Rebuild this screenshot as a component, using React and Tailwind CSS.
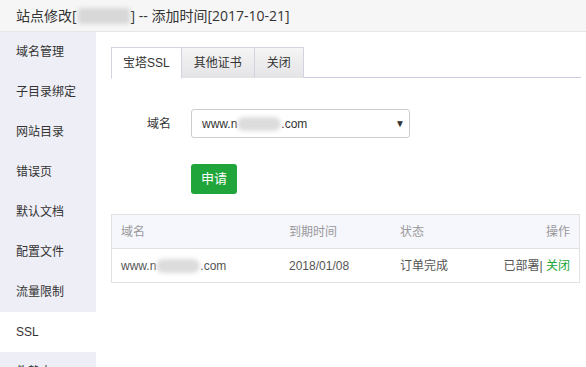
const menu = ['域名管理', '子目录绑定', '网站目录', '错误页', '默认文档', '配置文件', '流量限制', 'SSL', '伪静态'];

function Blur({ w }) {
  return <span className={`inline-block ${w} h-[14px] align-middle bg-[#dcdcdc] rounded-full blur-[2px]`} />;
}

export default function App() {
  return (
    <div className="w-[586px] h-[367px] overflow-hidden bg-white text-[#333] font-['Liberation_Sans','Noto_Sans_CJK_SC',sans-serif]">
      {/* Title */}
      <div className="h-[32px] bg-[#f6f6f6] border-b border-[#e6e6e6] flex items-center pl-[16px] text-[14px] text-[#333] font-['Open_Sans','Noto_Sans_CJK_SC',sans-serif]">
        站点修改[<span className="inline-block w-[52px] h-[16px] mx-[1px] bg-[#d8d8d8] blur-[2px] rounded" />] -- 添加时间[2017-10-21]
      </div>

      <div className="flex h-[335px]">
        {/* Sidebar */}
        <div className="w-[96px] shrink-0 bg-[#eeeef6]">
          {menu.map((m) => (
            <div
              key={m}
              className={`h-[40px] flex items-center pl-[16px] text-[12px] text-[#333] ${m === 'SSL' ? 'bg-white' : ''}`}
            >
              {m}
            </div>
          ))}
        </div>

        {/* Content */}
        <div className="flex-1 pt-[15px] pl-[15px] pr-[5px]">
          <div className="flex border-b border-[#cdcae3] h-[31px]">
            <div className="h-[32px] px-[11px] flex items-center text-[12px] bg-white border border-[#d3d2e0] border-b-white">宝塔SSL</div>
            <div className="h-[31px] px-[12px] flex items-center text-[12px] bg-gradient-to-b from-[#f5f5f5] to-[#e4e3e6] border-t border-r border-[#d3d2e0]">其他证书</div>
            <div className="h-[31px] px-[12px] flex items-center text-[12px] bg-gradient-to-b from-[#f5f5f5] to-[#e4e3e6] border-t border-r border-[#d3d2e0]">关闭</div>
          </div>

          <div className="flex items-center mt-[31px]">
            <div className="w-[60px] text-right text-[12px] text-[#333]">域名</div>
            <div className="ml-[20px] w-[219px] h-[29px] border border-[#ccc] rounded-[3px] flex items-center justify-between pl-[10px] pr-[4px] text-[12px] text-[#333]">
              <span className="flex items-center">
                www.n<Blur w="w-[44px]" />.com
              </span>
              <span className="text-[10px] text-[#333]">▼</span>
            </div>
          </div>

          <div className="ml-[80px] mt-[26px] w-[46px] h-[30px] bg-[#20a53a] rounded-[3px] flex items-center justify-center text-white text-[13px]">
            申请
          </div>

          <div className="mt-[20px] w-[469px] border border-[#e2e2e2] text-[12px]">
            <div className="h-[34px] bg-[#f6f6fd] border-b border-[#e2e2e2] grid grid-cols-[168px_111px_1fr_auto] items-center px-[9px] text-[#999]">
              <span>域名</span>
              <span>到期时间</span>
              <span>状态</span>
              <span>操作</span>
            </div>
            <div className="h-[33px] grid grid-cols-[168px_111px_1fr_auto] items-center px-[9px] text-[#555]">
              <span className="flex items-center">
                www.n<Blur w="w-[44px]" />.com
              </span>
              <span>2018/01/08</span>
              <span>订单完成</span>
              <span>
                已部署| <span className="text-[#20a53a]">关闭</span>
              </span>
            </div>
          </div>
        </div>
      </div>
    </div>
  );
}
